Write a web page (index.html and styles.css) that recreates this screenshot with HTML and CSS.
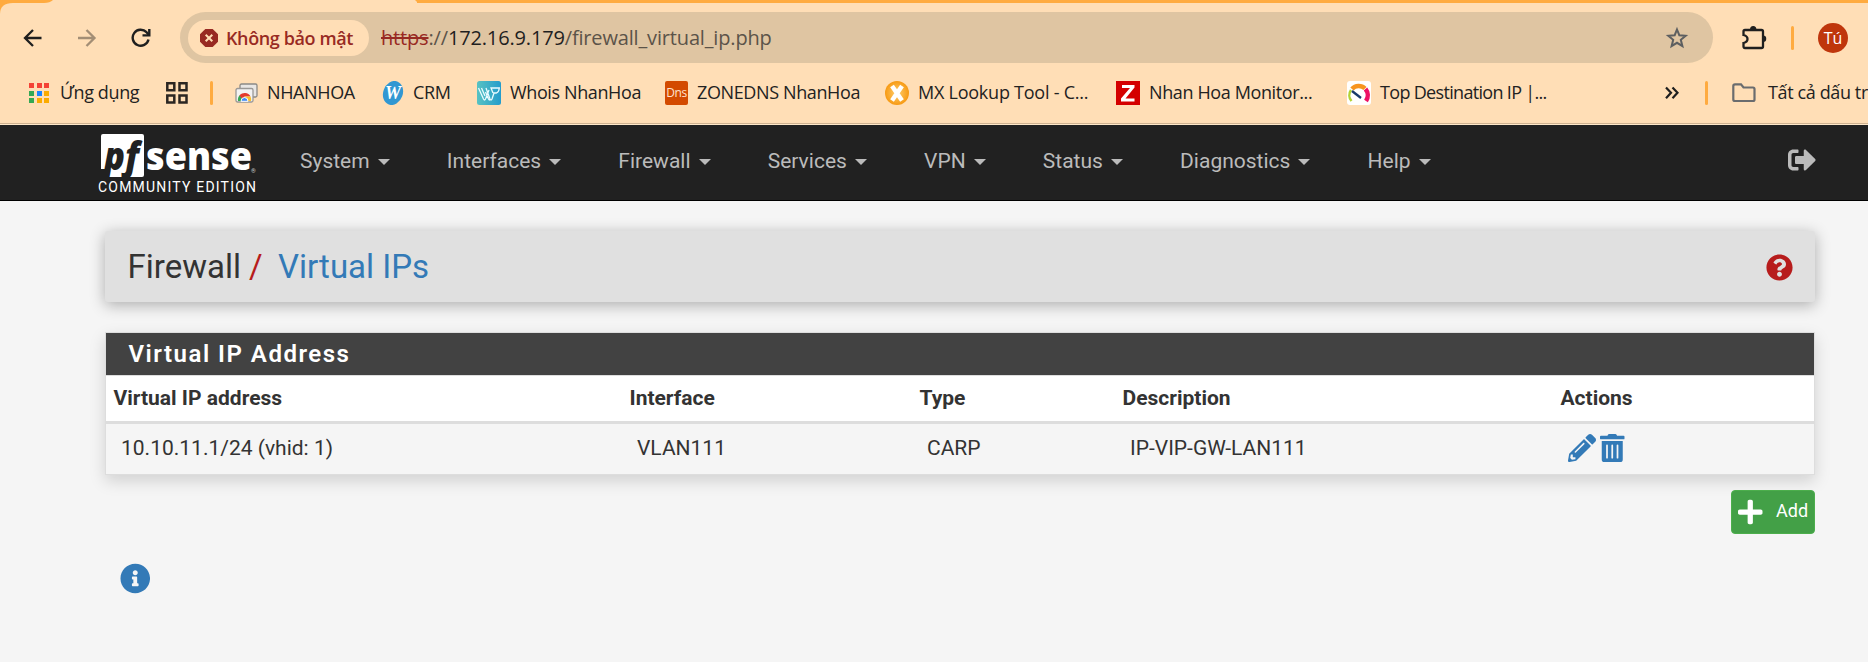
FILE: index.html
```html
<!DOCTYPE html>
<html lang="vi">
<head>
<meta charset="utf-8">
<title>Firewall: Virtual IPs</title>
<link rel="stylesheet" href="styles.css">
</head>
<body>
<header class="browser">
  <div class="tabstrip"><svg width="420" height="14"><path d="M0 0H53Q50 3 44 3H13Q0 3 0 14Z" fill="#ffab40"/><path d="M415 0H420V3H422Q417 3 415 0Z" fill="#ffab40"/></svg></div>
  <div class="toolbar">
    <svg class="tool back" width="20" height="20" fill="none" stroke="#1f1f1f" stroke-width="2.3"><path d="M18.5 10H2.5M10 2L2 10L10 18"/></svg>
    <svg class="tool forward" width="20" height="20" fill="none" stroke="#a38e75" stroke-width="2.3"><path d="M1 10H17M9.500 2L17.500 10L9.500 18"/></svg>
    <svg class="tool reload" width="20" height="20" fill="none" stroke="#1f1f1f" stroke-width="2.4"><path d="M17.500 11.500A8 8 0 1 1 15.500 4.200L18 7"/><path d="M18.300 1V7.400H11.500"/></svg>
    <div class="omnibox">
      <div class="chip">
        <svg width="18" height="18"><path d="M5.300 0H12.700L18 5.300V12.700L12.700 18H5.300L0 12.700V5.300Z" fill="#982a23"/><path d="M5.700 5.700L12.300 12.300M12.300 5.700L5.700 12.300" stroke="#ffdeb6" stroke-width="2"/></svg>
        <span>Không bảo mật</span>
      </div>
      <div class="url"><s>https</s>://<b>172.16.9.179</b>/firewall_virtual_ip.php</div>
      <svg class="star" width="24" height="24" fill="none" stroke="#5d5f60" stroke-width="2"><path d="M12 3.500L14.300 9.200L20.700 9.700L15.800 13.800L17.400 20.200L12 16.800L6.600 20.200L8.200 13.800L3.300 9.700L9.700 9.200Z"/></svg>
    </div>
    <svg class="puzzle" width="26" height="26"><path d="M4 5H20.500Q22 5 22 6.500V21.500Q22 23 20.500 23H4Q2.500 23 2.500 21.500V18Q6.500 17 6.500 14Q6.500 11 2.500 10V6.500Q2.500 5 4 5Z" fill="none" stroke="#1f1f1f" stroke-width="2.300"/><path d="M9 4.500A3.200 3.500 0 0 1 15.400 4.500ZM22 10.500A3.200 3.200 0 0 1 22 17Z" fill="#1f1f1f"/></svg>
    <i class="divider tool-divider"></i>
    <span class="avatar">Tú</span>
  </div>
  <nav class="bookmarks">
    <a class="bm bm-apps"><svg width="21" height="21"><path d="M0 0h5v5H0zM8 0h5v5H8zM15 0h5v5h-5z" fill="#f44336"/><path d="M0 8h5v5H0zM0 15h5v5H0z" fill="#34a853"/><path d="M8 8h5v5H8z" fill="#1a84ff"/><path d="M15 8h5v5h-5zM8 15h5v5H8zM15 15h5v5h-5z" fill="#fbab00"/></svg><span>Ứng dụng</span></a>
    <svg class="grid-icon" width="22" height="22" fill="none" stroke="#2b2622" stroke-width="2.500"><path d="M1.300 1.300h7v7h-7zM13.500 1.300h7v7h-7zM1.300 13.500h7v7h-7zM13.500 13.500h7v7h-7z"/></svg>
    <i class="divider bm-divider"></i>
    <a class="bm bm-nhanhoa"><svg width="23" height="20"><rect x="5" y="1" width="17" height="13" rx="1.500" fill="#e8e6e4" stroke="#8b8986" stroke-width="1.300"/><rect x="1" y="5.500" width="17" height="13.500" rx="1.500" fill="#f3f3f3" stroke="#9a9896" stroke-width="1.300"/><path d="M3 18A6.500 6.500 0 0 1 5 12L9.500 18Z" fill="#37a852"/><path d="M4.500 12.500A6.500 6.500 0 0 1 15.500 13.500H9.500L8 17Z" fill="#e33b2e"/><path d="M15.500 13.500A7 7 0 0 1 16 18H9.500V13.500Z" fill="#fbc02d"/><path d="M6 18.300A3.500 3.800 0 0 1 13 18.300Z" fill="#438af5" stroke="#fff"/></svg><span>NHANHOA</span></a>
    <a class="bm bm-crm"><svg width="22" height="24"><ellipse cx="11" cy="12" rx="9.800" ry="12.300" transform="rotate(20 11 12)" fill="#3197d2"/><text x="3" y="18" class="crm-w">W</text></svg><span>CRM</span></a>
    <a class="bm bm-whois"><svg width="24" height="24"><defs><linearGradient id="teal"><stop stop-color="#58c2c2"/><stop offset="1" stop-color="#249ccc"/></linearGradient></defs><rect width="24" height="24" rx="2.500" fill="url(#teal)"/><path d="M1.500 7L6.500 18Q7.500 20 8.500 18L12 9M4.500 7L8 15M9 7L13 18Q14 20 15 18L17 12H19.500Q22 11 22.300 7H14L16 12M8.500 11L11.500 18Q12.500 20 13 18" fill="none" stroke="#e9fbff" stroke-width="1.300"/></svg><span>Whois NhanHoa</span></a>
    <a class="bm bm-dns"><b class="dns">Dns</b><span>ZONEDNS NhanHoa</span></a>
    <a class="bm bm-mx"><svg width="24" height="24"><defs><radialGradient id="amber"><stop stop-color="#ffcf70"/><stop offset="1" stop-color="#f79a13"/></radialGradient></defs><circle cx="12" cy="12" r="12" fill="url(#amber)"/><path d="M7 5L17 19.500M17 5L7 19.500" stroke="#fff" stroke-width="4.500"/></svg><span>MX Lookup Tool - C...</span></a>
    <a class="bm bm-zabbix"><svg width="24" height="24"><path d="M0 0H24V24H0Z" fill="#d40000"/><path d="M6 4H18.500V6.500L9.500 17.500H18.500V20.500H5V17.500L14 7H6Z" fill="#fff"/></svg><span>Nhan Hoa Monitor...</span></a>
    <a class="bm bm-prtg"><svg width="24" height="24" fill="none"><rect width="24" height="24" rx="3" fill="#fff"/><path d="M4.500 20A9 9 0 0 1 4 9" stroke="#b2d235" stroke-width="2.500"/><path d="M5 8A9 9 0 0 1 18 7.500" stroke="#f7941e" stroke-width="4.500"/><path d="M18.500 8A10 10 0 0 1 19 20" stroke="#ee1164" stroke-width="4.500"/><path d="M5 10L14 17" stroke="#173a6b" stroke-width="2.300"/></svg><span>Top Destination IP |...</span></a>
    <svg class="more" width="14" height="14" fill="none" stroke="#1f1f1f" stroke-width="2.200"><path d="M1 1.500L6 6.800L1 12.200M7.500 1.500L12.500 6.800L7.500 12.200"/></svg>
    <i class="divider all-divider"></i>
    <a class="bm bm-all"><svg width="24" height="20" fill="none" stroke="#6a6c6e" stroke-width="2.200"><path d="M1.300 3Q1.300 1.300 3 1.300H9L11.500 4.500H21Q22.500 4.500 22.500 6V16.500Q22.500 18 21 18H3Q1.300 18 1.300 16.500Z"/></svg><span>Tất cả dấu trang</span></a>
  </nav>
</header>
<nav class="navbar">
  <svg class="logo" width="160" height="66">
    <path d="M5 0H44Q46 0 46 2V41Q46 43 44 43H7L10 35H3V2Q3 0 5 0Z" fill="#fff"/>
    <text class="pf" x="6" y="36" textLength="21" lengthAdjust="spacingAndGlyphs">p</text>
    <text class="pf" x="27" y="36" textLength="14" lengthAdjust="spacingAndGlyphs">f</text>
    <text class="sense" x="48" y="36" textLength="106" lengthAdjust="spacingAndGlyphs">sense</text>
    <text class="reg" x="153" y="39">®</text>
    <text class="edition" x="0" y="58" textLength="158">COMMUNITY EDITION</text>
  </svg>
  <ul class="menu">
    <li>System</li><li>Interfaces</li><li>Firewall</li><li>Services</li><li>VPN</li><li>Status</li><li>Diagnostics</li><li>Help</li>
  </ul>
  <svg class="logout" width="28" height="28" viewBox="0 0 512 512" fill="#bbb"><path d="M497 273L329 441c-15 15-41 4.500-41-17v-96H152c-13.300 0-24-10.700-24-24v-96c0-13.300 10.700-24 24-24h136V88c0-21.400 25.900-32 41-17l168 168c9.300 9.400 9.300 24.600 0 34zM192 436v-40c0-6.600-5.400-12-12-12H96c-17.700 0-32-14.300-32-32V160c0-17.700 14.300-32 32-32h84c6.600 0 12-5.400 12-12V76c0-6.600-5.400-12-12-12H96c-53 0-96 43-96 96v192c0 53 43 96 96 96h84c6.600 0 12-5.400 12-12z"/></svg>
</nav>
<main class="page">
  <div class="crumbs">
    <span>Firewall</span><span class="slash">/</span><a>Virtual IPs</a>
    <svg class="help" width="27" height="27" viewBox="0 0 512 512" fill="#b71c1c"><path d="M504 256c0 136.997-111.043 248-248 248S8 392.997 8 256C8 119.083 119.043 8 256 8s248 111.083 248 248zM262.655 90c-54.497 0-89.255 22.957-116.549 63.758-3.536 5.286-2.353 12.415 2.715 16.258l34.699 26.310c5.205 3.947 12.621 3.008 16.665-2.122 17.864-22.658 30.113-35.797 57.303-35.797 20.429 0 45.698 13.148 45.698 32.958 0 14.976-12.363 22.667-32.534 33.976C247.128 238.528 216 254.941 216 296v4c0 6.627 5.373 12 12 12h56c6.627 0 12-5.373 12-12v-1.333c0-28.462 83.186-29.647 83.186-106.667 0-58.002-60.165-102-116.531-102zM256 338c-25.365 0-46 20.635-46 46 0 25.364 20.635 46 46 46s46-20.636 46-46c0-25.365-20.635-46-46-46z"/></svg>
  </div>
  <section class="panel">
    <h2>Virtual IP Address</h2>
    <table>
      <colgroup><col class="c-ip"><col class="c-if"><col class="c-type"><col class="c-desc"><col></colgroup>
      <thead><tr><th>Virtual IP address</th><th>Interface</th><th>Type</th><th>Description</th><th>Actions</th></tr></thead>
      <tbody><tr><td>10.10.11.1/24 (vhid: 1)</td><td>VLAN111</td><td>CARP</td><td>IP-VIP-GW-LAN111</td><td><div class="actions">
        <svg width="28" height="28" viewBox="0 0 512 512"><path d="M497.900 142.100l-46.100 46.100c-4.700 4.700-12.300 4.700-17 0l-111-111c-4.700-4.700-4.700-12.300 0-17l46.100-46.100c18.700-18.700 49.100-18.700 67.900 0l60.100 60.100c18.800 18.700 18.800 49.100 0 67.900zM284.200 99.800L21.600 362.400.4 483.900c-2.900 16.400 11.400 30.600 27.800 27.800l121.500-21.300 262.600-262.600c4.700-4.700 4.700-12.300 0-17l-111-111c-4.800-4.700-12.400-4.700-17.100 0zM124.100 339.900c-5.500-5.500-5.500-14.300 0-19.800l154-154c5.500-5.500 14.300-5.500 19.800 0s5.500 14.300 0 19.800l-154 154c-5.500 5.500-14.300 5.500-19.800 0zM88 424h48v36.300l-64.500 11.300-31.100-31.100L51.700 376H88v48z"/></svg>
        <svg width="24.500" height="28" viewBox="0 0 448 512"><path d="M32 464a48 48 0 0 0 48 48h288a48 48 0 0 0 48-48V128H32zm272-256a16 16 0 0 1 32 0v224a16 16 0 0 1-32 0zm-96 0a16 16 0 0 1 32 0v224a16 16 0 0 1-32 0zm-96 0a16 16 0 0 1 32 0v224a16 16 0 0 1-32 0zM432 32H312l-9.400-18.700A24 24 0 0 0 281.100 0H166.800a23.720 23.720 0 0 0-21.400 13.300L136 32H16A16 16 0 0 0 0 48v32a16 16 0 0 0 16 16h416a16 16 0 0 0 16-16V48a16 16 0 0 0-16-16z"/></svg>
      </div></td></tr></tbody>
    </table>
  </section>
  <div class="add-row"><a class="add"><svg width="24.500" height="28" viewBox="0 0 448 512" fill="#fff"><path d="M416 208H272V64c0-17.670-14.330-32-32-32h-32c-17.670 0-32 14.330-32 32v144H32c-17.670 0-32 14.330-32 32v32c0 17.670 14.330 32 32 32h144v144c0 17.670 14.330 32 32 32h32c17.670 0 32-14.330 32-32V304h144c17.670 0 32-14.330 32-32v-32c0-17.670-14.330-32-32-32z"/></svg><span>Add</span></a></div>
  <svg class="info" width="30.500" height="31" viewBox="0 0 512 512" fill="#337ab7"><path d="M256 8C119.043 8 8 119.083 8 256c0 136.997 111.043 248 248 248s248-111.003 248-248C504 119.083 392.957 8 256 8zm0 110c23.196 0 42 18.804 42 42s-18.804 42-42 42-42-18.804-42-42 18.804-42 42-42zm56 254c0 6.627-5.373 12-12 12h-88c-6.627 0-12-5.373-12-12v-24c0-6.627 5.373-12 12-12h12v-64h-12c-6.627 0-12-5.373-12-12v-24c0-6.627 5.373-12 12-12h64c6.627 0 12 5.373 12 12v100h12c6.627 0 12 5.373 12 12v24z"/></svg>
</main>
</body>
</html>
```
FILE: styles.css
```css
* { box-sizing: border-box; }
body { margin: 0; width: 1868px; height: 662px; overflow: hidden; background: #f5f5f5; font: 21px/30px Roboto, sans-serif; color: #333; }
svg { display: block; flex: none; }

.browser { height: 125px; background: #ffdeb6; overflow: hidden; border-bottom: 1px solid #ffe8c9; box-shadow: inset 0 -1px #ceb291; font-family: "Open Sans", "Noto Sans", sans-serif; }
.tabstrip { height: 12px; background: linear-gradient(90deg, transparent 417px, #ffab40 417px) 0 0 / 100% 3px no-repeat; }
.toolbar { display: flex; align-items: center; height: 51px; }
.tool { margin-top: 1px; }
.back { margin-left: 23px; }
.forward { margin-left: 34px; }
.reload { margin-left: 34px; }
.omnibox { display: flex; align-items: center; flex: none; width: 1533px; height: 51px; margin-left: 29px; padding-left: 8px; border-radius: 26px; background: #dfc5a2; }
.chip { display: flex; align-items: center; width: 181px; height: 36px; padding-left: 12px; gap: 8px; border-radius: 18px; background: #ffdeb6; color: #982a23; font-size: 18px; font-weight: 600; white-space: nowrap; letter-spacing: -.38px; }
.url { margin-left: 12px; font-size: 20px; letter-spacing: -.16px; color: #5b5349; white-space: nowrap; }
.url s { color: #982a23; text-decoration-thickness: 1.5px; }
.url b { font-weight: 400; color: #1f1f1f; }
.star { margin-left: auto; margin-right: 24px; }
.puzzle { margin-left: 28px; }
.divider { flex: none; width: 3px; height: 24px; border-radius: 2px; background: #ffab40; }
.tool-divider { margin-left: 24px; }
.avatar { flex: none; width: 30px; height: 30px; margin-left: 24px; border-radius: 50%; background: #bf360c; color: #fff; font-size: 16px; line-height: 30px; text-align: center; }

.bookmarks { display: flex; align-items: center; height: 60px; font-size: 18px; color: #222; }
.bm { display: flex; align-items: center; flex: none; white-space: nowrap; letter-spacing: -.38px; }
.bm span { padding-bottom: 2px; }
.bm-apps { width: 137px; margin-left: 29px; gap: 10px; }
.bm-divider { margin-left: 22px; }
.bm-nhanhoa { width: 147px; margin-left: 22px; gap: 9px; }
.bm-crm { width: 95px; gap: 9px; }
.bm-whois { width: 188px; gap: 9px; }
.bm-dns { width: 220px; gap: 9px; }
.bm-mx { width: 231px; gap: 9px; letter-spacing: -.24px; }
.bm-zabbix { width: 231px; gap: 9px; }
.bm-prtg { width: 303px; gap: 9px; letter-spacing: -.68px; }
.bm-all { margin-left: 24px; gap: 12px; }
.all-divider { margin-left: 26px; }
.more { margin-left: 15px; }
.crm-w { font: italic 700 18px "Liberation Serif", serif; fill: #fff; }
.dns { width: 23px; height: 24px; border-radius: 2px; background: #d34a00; color: #ffe2cc; font: 400 12px/24px "Open Sans", sans-serif; text-align: center; }

.navbar { display: flex; height: 76px; background: #212121; border-bottom: 1px solid #000; }
.logo { margin: 9px 0 0 98px; overflow: visible; }
.pf { font: italic 800 39px "Open Sans", sans-serif; fill: #212121; }
.sense { font: 800 39px "Open Sans", sans-serif; fill: #fff; }
.reg { font: 6px Roboto, sans-serif; fill: #ccc; }
.edition { font: 400 14px Roboto, sans-serif; fill: #fff; }
.menu { display: flex; gap: 57.2px; margin: 20px 0 0 42px; padding: 0; list-style: none; color: #bbb; }
.menu li { display: flex; align-items: center; height: 32px; gap: 8px; }
.menu li::after { content: ""; margin-top: 2px; border: 6px solid transparent; border-top-color: #bbb; border-bottom: 0; }
.logout { margin: 21px 52px 0 auto; }

.page { padding: 30px 53px 0 105px; }
.crumbs { display: flex; align-items: center; height: 71px; padding: 0 22.5px; border-radius: 3px; background: #e0e0e0; box-shadow: 0 3px 15px rgba(0,0,0,.3); font-size: 33px; }
.slash { margin: 0 15.5px 0 8px; color: #b71c1c; }
.crumbs a { color: #337ab7; }
.help { margin: 2px 0 0 auto; }
.panel { height: 143px; margin-top: 30px; border: 1px solid #ddd; background: #fff; box-shadow: 0 6px 15px rgba(0,0,0,.15); }
.panel h2 { height: 43px; margin: 0; padding-left: 22.5px; border-bottom: 1px solid #ddd; background: #424242; color: #fff; font-size: 24px; line-height: 42px; font-weight: 600; letter-spacing: 1.5px; }
table { width: 100%; border-collapse: separate; border-spacing: 0; table-layout: fixed; }
.c-ip { width: 516px; }
.c-if { width: 290px; }
.c-type { width: 203px; }
.c-desc { width: 438px; }
th { height: 48px; padding: 0 7.5px 2px; border-bottom: 3px solid #ddd; text-align: left; font-weight: 700; }
td { height: 50px; padding: 0 15px 2px; background: #f5f5f5; }
.actions { display: flex; gap: 4px; fill: #337ab7; }
.add-row { display: flex; justify-content: flex-end; margin-top: 15px; }
.add { display: flex; align-items: center; width: 84px; height: 44px; padding-left: 6px; gap: 13.5px; border: 1px solid #4cae4c; border-radius: 4px; background: #43a047; color: #fff; font-size: 18px; }
.add span { padding-bottom: 2px; }
.info { margin: 29px 0 0 14.5px; }
```
